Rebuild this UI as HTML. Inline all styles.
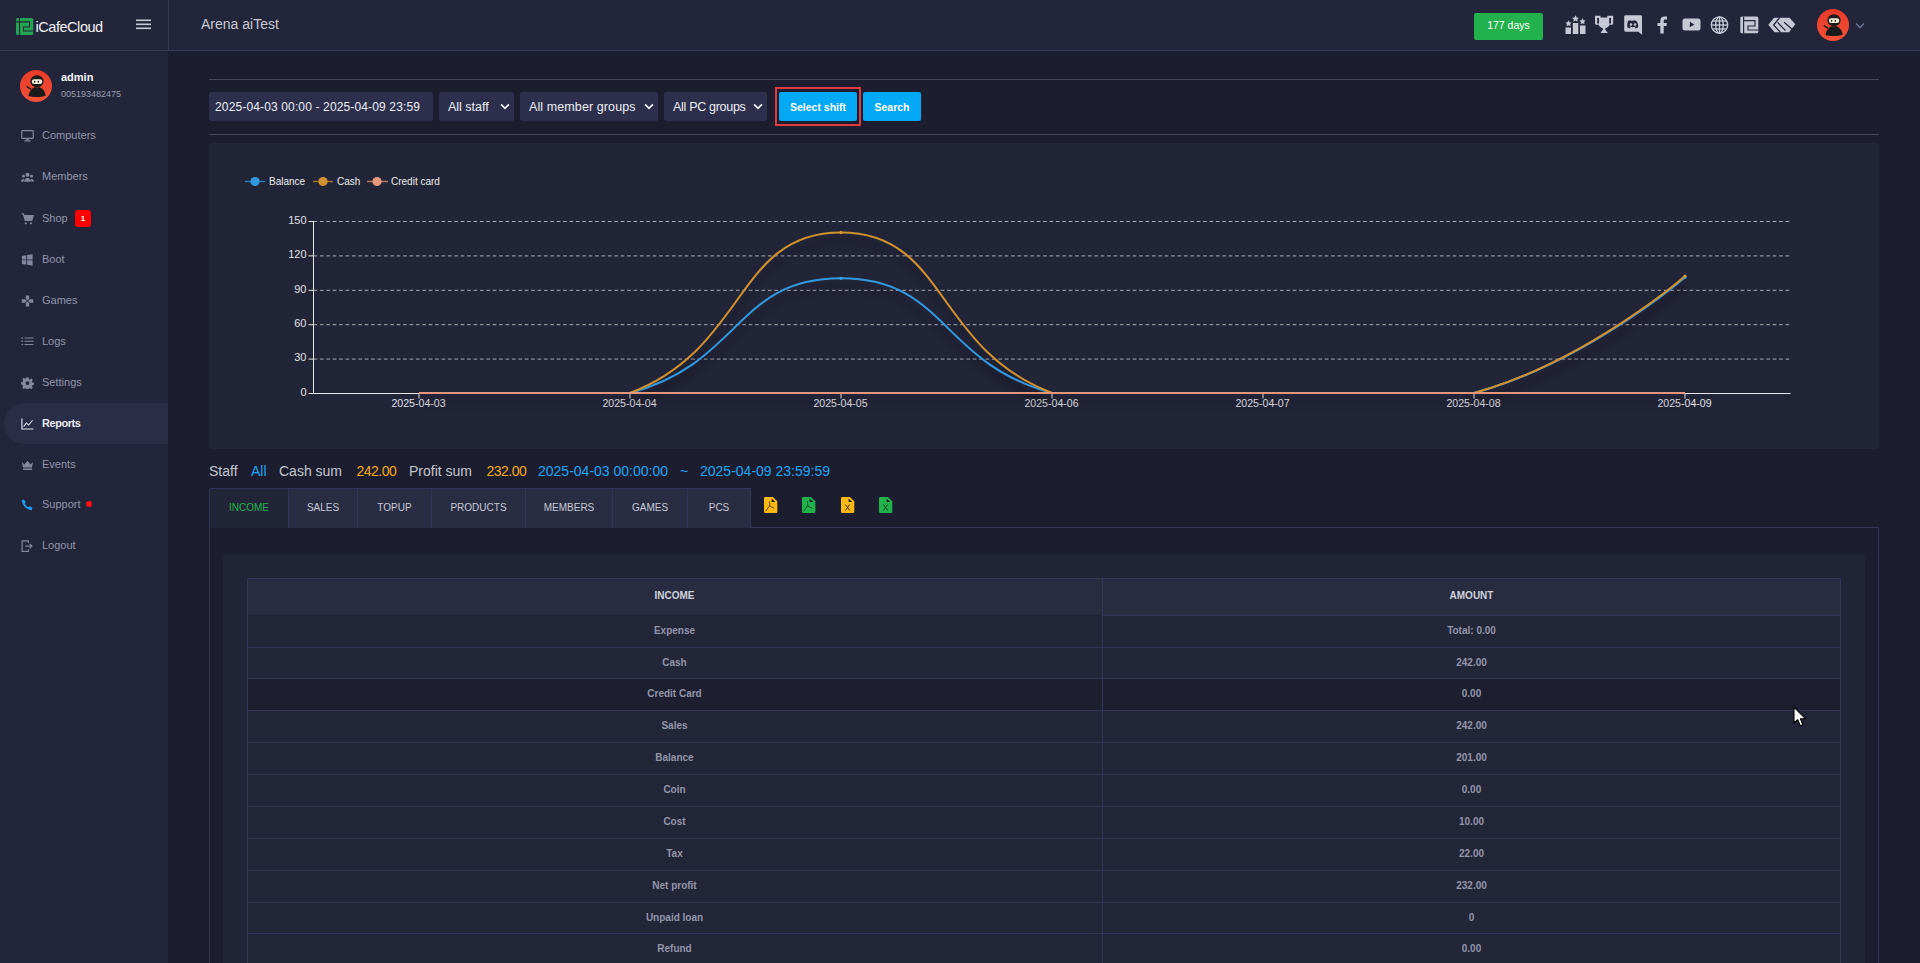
<!DOCTYPE html>
<html><head><meta charset="utf-8"><title>iCafeCloud Reports</title>
<style>
*{box-sizing:border-box;margin:0;padding:0}
html,body{width:1920px;height:963px;overflow:hidden;background:#1c1d2f;font-family:"Liberation Sans",sans-serif;color:#c8cad6}
.abs{position:absolute}
#hdr{position:absolute;left:0;top:0;width:1920px;height:51px;background:#23253a;border-bottom:1px solid #36385c}
#hdr .vsep{position:absolute;left:168px;top:0;width:1px;height:50px;background:#36385c}
#side{position:absolute;left:0;top:51px;width:168px;height:912px;background:#23253a}
.mi{position:absolute;left:0;width:168px;height:16px}
.mi .ic{position:absolute;left:20.5px;top:2.5px;width:13px;height:12px;display:block}.mi .ic svg{width:13px;height:12px;display:block}
.mi .t{position:absolute;left:42px;top:0;font-size:11px;line-height:16px;color:#9295aa}
.mi.act .t{color:#e8eaf2;font-weight:bold;letter-spacing:-0.45px}
.mi.act::before{content:"";position:absolute;left:4px;top:-12px;width:164px;height:41px;background:#2a2d47;border-radius:20px 0 0 20px}
.hline{position:absolute;left:209px;width:1670px;height:1px;background:#45475a}
.inp{position:absolute;top:92px;height:29px;background:#2d2f4d;border-radius:2px;color:#eceef6;font-size:12px;line-height:30px}
.sel{line-height:31px!important}.sel .car{position:absolute;right:4px;top:11px;width:10px;height:7px}
.btn{position:absolute;top:92px;height:29px;background:#03a9f4;border-radius:2px;color:#fff;font-size:10.5px;font-weight:bold;line-height:31px;text-align:center}
#panel{position:absolute;left:209px;top:143px;width:1670px;height:306px;background:#222438;border-radius:4px}
.sum{position:absolute;top:463px;font-size:14px;line-height:16px;white-space:nowrap}
.tab{position:absolute;top:488px;height:40px;background:#292c43;border:1px solid #333558;border-bottom:none;font-size:10px;line-height:38px;text-align:center;color:#c8cad6}
.tab.act{background:#222438;color:#20b54a}
#tc{position:absolute;left:209px;top:527px;width:1670px;height:440px;border:1px solid #333558;border-bottom:none;background:#1c1d2f}
#inner{position:absolute;left:223px;top:554px;width:1642px;height:420px;background:#222438;border-radius:4px}
#tbl{position:absolute;left:247px;top:578px;width:1594px;height:400px;border:1px solid #333558;border-bottom:none}
.th{position:absolute;left:247px;top:578px;width:1594px;height:37px;background:#292b40}
.th div,.tr div{position:absolute;top:0;height:100%;text-align:center;font-size:10px}
.th div{font-weight:bold;color:#d0d2dc;line-height:36px}
.c1{left:0;width:855px}
.c2{left:855px;width:739px}
.tr{position:absolute;left:247px;width:1594px;border-top:1px solid #333558}
.tr div{line-height:30px;color:#9496aa;font-weight:bold}
.vdiv{position:absolute;left:1102px;top:578px;width:1px;height:400px;background:#333558}
.ticon{position:absolute;top:16px;height:18px}
</style></head><body>
<div id="hdr">
  <div class="vsep"></div>
  <!-- logo -->
  <svg class="abs" style="left:16px;top:18px" width="90" height="18" viewBox="0 0 90 18">
    <rect x="0" y="0" width="17.2" height="17" rx="1.6" fill="#22a552"/>
    <g stroke="#23253a" stroke-width="1.1" fill="none"><path d="M3.5 0V17"/><path d="M0 3.9H13.5V9H7.5V13H17.2"/></g>
    <text x="19.5" y="14.2" font-family="Liberation Sans, sans-serif" font-size="14.5" fill="#f2f2f2" letter-spacing="-0.45">iCafeCloud</text>
  </svg>
  <svg class="abs" style="left:136px;top:19px" width="16" height="11" viewBox="0 0 16 11"><rect x="0" y="0.5" width="15" height="1.6" fill="#c8cad6"/><rect x="0" y="4.5" width="15" height="1.6" fill="#c8cad6"/><rect x="0" y="8.5" width="15" height="1.6" fill="#c8cad6"/></svg>
  <div class="abs" style="left:201px;top:16px;font-size:14px;line-height:16px;color:#c8cad6">Arena aiTest</div>
  <div class="abs" style="left:1474px;top:13px;width:69px;height:27px;background:#22b14c;border-radius:2px;color:#fff;font-size:10.5px;line-height:25px;text-align:center">177 days</div>
  
<svg class="abs" style="left:1565px;top:15px" width="21" height="19" viewBox="0 0 21 19">
<path d="M10.5 0.3l1.1 2.2 2.4.3-1.8 1.6.5 2.4-2.2-1.2-2.2 1.2.5-2.4-1.8-1.6 2.4-.3z" fill="#c6c8d6"/>
<path d="M3.5 5.3l1 2 2.2.3-1.6 1.5.4 2.2-2-1.1-2 1.1.4-2.2-1.6-1.5 2.2-.3z" fill="#c6c8d6"/>
<path d="M17.5 3.3l1 2 2.2.3-1.6 1.5.4 2.2-2-1.1-2 1.1.4-2.2-1.6-1.5 2.2-.3z" fill="#c6c8d6"/>
<rect x="0.5" y="12.5" width="5.5" height="6.5" fill="#c6c8d6"/><rect x="7.8" y="8" width="5.5" height="11" fill="#c6c8d6"/><rect x="15" y="10.5" width="5.5" height="8.5" fill="#c6c8d6"/></svg>
<svg class="abs" style="left:1595px;top:15px" width="19" height="19" viewBox="0 0 19 19">
<path d="M0 0.8H5.5V2.5H12.3V0.8H18.2V8.3C18.2 9.3 17.3 9.8 16.3 9.8H14.6C13.8 11.4 12.3 12.6 10.2 13.6V14.4L12.8 18.1H5.4L8 14.4V13.6C5.9 12.6 4.4 11.4 3.6 9.8H1.9C0.9 9.8 0 9.3 0 8.3Z" fill="#c6c8d6"/>
<rect x="2.2" y="2.9" width="1.8" height="5.6" fill="#23253a"/><rect x="14.2" y="2.9" width="1.8" height="5.6" fill="#23253a"/></svg>
<svg class="abs" style="left:1624px;top:15px" width="19" height="20" viewBox="0 0 19 20">
<path d="M1.6 0.2h15a1.4 1.4 0 0 1 1.4 1.4V19.7l-3.6-3H1.6A1.4 1.4 0 0 1 .2 15.3V1.6A1.4 1.4 0 0 1 1.6 0.2z" fill="#c6c8d6"/>
<path d="M3.2 12.3c1.2 .8 2.4 1.1 2.9 1.1l.6-.9c-.6-.2-1.1-.5-1.5-.8l.4-.2c2 .9 4.2 .9 6.2 0l.4 .2c-.4 .3-.9 .6-1.5 .8l.6 .9c.5 0 1.7-.3 2.9-1.1.1-2.4-.5-4.5-1.8-6.2-.9-.5-1.8-.8-2.6-.9l-.3.5c-.9-.1-1.8-.1-2.7 0l-.3-.5c-.9 .1-1.8 .4-2.6 .9C3.6 7.8 3.1 9.9 3.2 12.3z" fill="#23253a"/>
<circle cx="7" cy="9.4" r="1.25" fill="#c6c8d6"/><circle cx="11" cy="9.4" r="1.25" fill="#c6c8d6"/></svg>
<svg class="abs" style="left:1657px;top:16px" width="11" height="18" viewBox="0 0 11 18">
<path d="M3.3 17.5V10H0.5V7h2.8V4.8C3.3 2 5 0.5 7.5 0.5c1.2 0 2.2.1 2.5.1v2.8H8.3c-1.4 0-1.6.7-1.6 1.6V7h3.2l-.4 3H6.7v7.5z" fill="#c6c8d6"/></svg>
<svg class="abs" style="left:1682px;top:18px" width="19" height="13" viewBox="0 0 19 13">
<path d="M3 0.5h13a2.5 2.5 0 0 1 2.5 2.5v7a2.5 2.5 0 0 1-2.5 2.5H3A2.5 2.5 0 0 1 .5 10V3A2.5 2.5 0 0 1 3 .5z" fill="#c6c8d6"/>
<path d="M7.8 3.8v5.4l4.6-2.7z" fill="#23253a"/></svg>
<svg class="abs" style="left:1710px;top:16px" width="19" height="18" viewBox="0 0 19 18">
<g fill="none" stroke="#c6c8d6" stroke-width="1.35"><circle cx="9.5" cy="9" r="8.2"/><ellipse cx="9.5" cy="9" rx="3.8" ry="8.2"/><line x1="9.5" y1="0.8" x2="9.5" y2="17.2"/><line x1="1.3" y1="9" x2="17.7" y2="9"/><line x1="2.5" y1="5" x2="16.5" y2="5"/><line x1="2.5" y1="13" x2="16.5" y2="13"/></g></svg>
<svg class="abs" style="left:1740px;top:16px" width="19" height="18" viewBox="0 0 19 18">
<rect x="0.3" y="0.5" width="18" height="16.8" rx="1.6" fill="#c6c8d6"/>
<g stroke="#23253a" stroke-width="1.15" fill="none"><path d="M3.6 0.5V17.3"/><path d="M3.6 4.6H15V10H8V14H18.3"/></g></svg>
<svg class="abs" style="left:1768px;top:17px" width="29" height="17" viewBox="0 0 29 17">
<path d="M6 0.8h15.5l5.8 6.5-6.3 7.9H6.5L0.3 7.8z" fill="#c6c8d6"/>
<g stroke="#23253a" stroke-width="1.2" fill="none"><path d="M11.9 0.3L5.6 8l7.2 7.7"/><path d="M9.6 5.4l7.9 8.2"/><path d="M16.2 5.2l8.3 7.5"/></g></svg>

  <div class="abs" style="left:1817px;top:9px;width:32px;height:32px"><svg width="32" height="32" viewBox="0 0 32 32"><defs><linearGradient id="avg" x1="0" y1="0" x2="0" y2="1"><stop offset="0" stop-color="#e83a28"/><stop offset="1" stop-color="#f25238"/></linearGradient></defs><circle cx="16" cy="16" r="16" fill="url(#avg)"/>
<path d="M8.4 25.9 C9.3 21.5 11.6 18.6 14.3 17.3 L19.8 17.3 C22.6 18.6 25 21.6 25.8 25.4 C21 27.4 13 27.4 8.4 25.9z" fill="#1b1b1b"/>
<ellipse cx="17" cy="11.3" rx="6.6" ry="6" fill="#1b1b1b"/>
<rect x="11.8" y="9.2" width="10.5" height="4.9" rx="2.4" fill="#f4ecd9"/>
<ellipse cx="14.6" cy="11.8" rx="0.75" ry="1.05" fill="#1b1b1b"/><ellipse cx="18.4" cy="11.8" rx="0.75" ry="1.05" fill="#1b1b1b"/>
<path d="M6.7 16.4 L11 19.4" stroke="#1b1b1b" stroke-width="1.3"/></svg></div>
  <svg class="abs" style="left:1855px;top:22px" width="10" height="7" viewBox="0 0 10 7"><path d="M1 1.5l4 4 4-4" stroke="#6b7ba3" stroke-width="1.3" fill="none"/></svg>
</div>
<div id="side">
  <div class="abs" style="left:20px;top:19px;width:32px;height:32px"><svg width="32" height="32" viewBox="0 0 32 32"><defs><linearGradient id="avg" x1="0" y1="0" x2="0" y2="1"><stop offset="0" stop-color="#e83a28"/><stop offset="1" stop-color="#f25238"/></linearGradient></defs><circle cx="16" cy="16" r="16" fill="url(#avg)"/>
<path d="M8.4 25.9 C9.3 21.5 11.6 18.6 14.3 17.3 L19.8 17.3 C22.6 18.6 25 21.6 25.8 25.4 C21 27.4 13 27.4 8.4 25.9z" fill="#1b1b1b"/>
<ellipse cx="17" cy="11.3" rx="6.6" ry="6" fill="#1b1b1b"/>
<rect x="11.8" y="9.2" width="10.5" height="4.9" rx="2.4" fill="#f4ecd9"/>
<ellipse cx="14.6" cy="11.8" rx="0.75" ry="1.05" fill="#1b1b1b"/><ellipse cx="18.4" cy="11.8" rx="0.75" ry="1.05" fill="#1b1b1b"/>
<path d="M6.7 16.4 L11 19.4" stroke="#1b1b1b" stroke-width="1.3"/></svg></div>
  <div class="abs" style="left:61px;top:20px;font-size:11px;line-height:13px;font-weight:bold;color:#f4f4f8">admin</div>
  <div class="abs" style="left:61px;top:38px;font-size:9px;line-height:11px;color:#9b9db0">005193482475</div>
</div>
<div style="position:absolute;left:0;top:0">
<div class="mi" style="top:127px"><span class="ic"><svg width="15" height="14" viewBox="0 0 15 14"><rect x="0.8" y="0.8" width="13.4" height="9" rx="0.8" fill="none" stroke="#82869e" stroke-width="1.4"/><rect x="6" y="10" width="3" height="2.2" fill="#82869e"/><rect x="3.8" y="12" width="7.4" height="1.4" fill="#82869e"/></svg></span><span class="t">Computers</span></div>
<div class="mi" style="top:168px"><span class="ic"><svg width="15" height="14" viewBox="0 0 15 14"><circle cx="7.5" cy="4.5" r="2.4" fill="#82869e"/><circle cx="2.8" cy="6" r="1.7" fill="#82869e"/><circle cx="12.2" cy="6" r="1.7" fill="#82869e"/><path d="M3.6 12.5c0-2.6 1.7-4.2 3.9-4.2s3.9 1.6 3.9 4.2z" fill="#82869e"/><path d="M0 12.5c0-2 1-3.2 2.6-3.2.5 0 .9.1 1.2.3-.6.8-.9 1.8-.9 2.9z M15 12.5c0-2-1-3.2-2.6-3.2-.5 0-.9.1-1.2.3.6.8.9 1.8.9 2.9z" fill="#82869e"/></svg></span><span class="t">Members</span></div>
<div class="mi" style="top:210px"><span class="ic"><svg width="15" height="14" viewBox="0 0 15 14"><path d="M0.5 1h2.2l2.2 7.5h7.5l1.8-5.5H4" fill="none" stroke="#82869e" stroke-width="1.5"/><path d="M4 3h10l-1.8 5.5H5z" fill="#82869e"/><circle cx="5.5" cy="12" r="1.3" fill="#82869e"/><circle cx="11.5" cy="12" r="1.3" fill="#82869e"/></svg></span><span class="t">Shop</span></div>
<div class="mi" style="top:251px"><span class="ic"><svg width="15" height="14" viewBox="0 0 15 14"><path d="M1 2.2l5-0.8v5H1z M7 1.2l6.5-1v6.2H7z M1 7.4h5v5l-5-.8z M7 7.4h6.5v6.2L7 12.6z" fill="#82869e"/></svg></span><span class="t">Boot</span></div>
<div class="mi" style="top:292px"><span class="ic"><svg width="15" height="14" viewBox="0 0 15 14"><path d="M5.5 0.5h4v4l-2 2-2-2z M5.5 13.5h4v-4l-2-2-2 2z M0.8 5h4l2 2-2 2h-4z M14.2 5h-4l-2 2 2 2h4z" fill="#82869e"/></svg></span><span class="t">Games</span></div>
<div class="mi" style="top:333px"><span class="ic"><svg width="15" height="14" viewBox="0 0 15 14"><g fill="#82869e"><rect x="0.5" y="1.5" width="1.8" height="1.6"/><rect x="4" y="1.7" width="10.5" height="1.2"/><rect x="0.5" y="5.3" width="1.8" height="1.6"/><rect x="4" y="5.5" width="10.5" height="1.2"/><rect x="0.5" y="9.1" width="1.8" height="1.6"/><rect x="4" y="9.3" width="10.5" height="1.2"/></g></svg></span><span class="t">Logs</span></div>
<div class="mi" style="top:374px"><span class="ic"><svg width="15" height="14" viewBox="0 0 15 14"><path d="M6.3 0.3h2.4l.4 1.9 1.3.6 1.6-1.1 1.7 1.7-1.1 1.6.6 1.3 1.9.4v2.4l-1.9.4-.6 1.3 1.1 1.6-1.7 1.7-1.6-1.1-1.3.6-.4 1.9H6.3l-.4-1.9-1.3-.6-1.6 1.1-1.7-1.7 1.1-1.6-.6-1.3L0 8.3V5.9l1.9-.4.6-1.3-1.1-1.6 1.7-1.7 1.6 1.1 1.3-.6z" fill="#82869e"/><circle cx="7.5" cy="7.1" r="2.2" fill="#23253a"/></svg></span><span class="t">Settings</span></div>
<div class="mi act" style="top:415px"><span class="ic"><svg width="15" height="14" viewBox="0 0 15 14"><path d="M1 0.5v12.3h13.5" fill="none" stroke="#e8eaf4" stroke-width="1.3"/><path d="M3 10l3.2-4.2 2.6 2.4 4.6-5.6" fill="none" stroke="#e8eaf4" stroke-width="1.2"/></svg></span><span class="t">Reports</span></div>
<div class="mi" style="top:456px"><span class="ic"><svg width="15" height="14" viewBox="0 0 15 14"><path d="M1 3.5l3 2.8 3.5-4.3 3.5 4.3 3-2.8-1.3 6.5H2.3z" fill="#82869e"/><rect x="2.3" y="11" width="10.4" height="1.8" fill="#82869e"/></svg></span><span class="t">Events</span></div>
<div class="mi" style="top:496px"><span class="ic"><svg width="15" height="14" viewBox="0 0 15 14"><path d="M3.3 0.5l2.2 3-1.3 1.8c.8 1.8 2.3 3.3 4.3 4.3l1.8-1.3 3 2.2-.9 2.5C7 13 1 7 .8 1.4z" fill="#1e9cf0"/></svg></span><span class="t">Support</span></div>
<div class="mi" style="top:537px"><span class="ic"><svg width="15" height="14" viewBox="0 0 15 14"><path d="M8.5 3.5V1H1.2v12.2h7.3v-2.5" fill="none" stroke="#82869e" stroke-width="1.4"/><path d="M5 7.1h7.5 M10 4.5l2.6 2.6L10 9.7" fill="none" stroke="#82869e" stroke-width="1.4"/></svg></span><span class="t">Logout</span></div>

<div class="abs" style="left:75px;top:210px;width:16px;height:17px;background:#ff0000;border-radius:3px;color:#fff;font-size:8px;font-weight:bold;line-height:17px;text-align:center">1</div>
<div class="abs" style="left:86px;top:501px;width:6px;height:6px;background:#ff1010;border-radius:50%"></div>
</div>
<div class="hline" style="top:79px"></div>
<div class="hline" style="top:134px"></div>
<div class="inp" style="left:209px;width:224px;padding-left:6px;letter-spacing:0.14px">2025-04-03 00:00 - 2025-04-09 23:59</div>
<div class="inp sel" style="left:439px;width:75px;padding-left:9px;font-size:12.5px">All staff<svg class="car" viewBox="0 0 11 7"><path d="M1.2 1.2l4.3 4.3 4.3-4.3" stroke="#f0f0f4" stroke-width="2" fill="none"/></svg></div>
<div class="inp sel" style="left:520px;width:138px;padding-left:9px;font-size:12.5px;letter-spacing:0.1px">All member groups<svg class="car" viewBox="0 0 11 7"><path d="M1.2 1.2l4.3 4.3 4.3-4.3" stroke="#f0f0f4" stroke-width="2" fill="none"/></svg></div>
<div class="inp sel" style="left:664px;width:103px;padding-left:9px;font-size:12.5px;letter-spacing:-0.3px">All PC groups<svg class="car" viewBox="0 0 11 7"><path d="M1.2 1.2l4.3 4.3 4.3-4.3" stroke="#f0f0f4" stroke-width="2" fill="none"/></svg></div>
<div class="abs" style="left:775px;top:87px;width:86px;height:39px;border:2px solid #e0393e"></div>
<div class="btn" style="left:779px;width:78px">Select shift</div>
<div class="btn" style="left:863px;width:58px">Search</div>
<div id="panel"></div>
<svg class="chart" width="1920" height="963" viewBox="0 0 1920 963" style="position:absolute;left:0;top:0">
<defs><filter id="sh" x="-10%" y="-50%" width="120%" height="200%"><feDropShadow dx="0" dy="9" stdDeviation="5" flood-color="#000" flood-opacity="0.45"/></filter></defs>
<line x1="313.5" y1="221.5" x2="1790.5" y2="221.5" stroke="#d8d8d8" stroke-opacity="0.75" stroke-dasharray="3.7,2.7" stroke-width="1"/><line x1="313.5" y1="255.9" x2="1790.5" y2="255.9" stroke="#d8d8d8" stroke-opacity="0.75" stroke-dasharray="3.7,2.7" stroke-width="1"/><line x1="313.5" y1="290.3" x2="1790.5" y2="290.3" stroke="#d8d8d8" stroke-opacity="0.75" stroke-dasharray="3.7,2.7" stroke-width="1"/><line x1="313.5" y1="324.7" x2="1790.5" y2="324.7" stroke="#d8d8d8" stroke-opacity="0.75" stroke-dasharray="3.7,2.7" stroke-width="1"/><line x1="313.5" y1="359.1" x2="1790.5" y2="359.1" stroke="#d8d8d8" stroke-opacity="0.75" stroke-dasharray="3.7,2.7" stroke-width="1"/>
<line x1="313.5" y1="221.0" x2="313.5" y2="393.5" stroke="#e6e6e6" stroke-width="1"/>
<line x1="313.5" y1="393.5" x2="1790.5" y2="393.5" stroke="#e6e6e6" stroke-width="1"/>
<g font-family="Liberation Sans, sans-serif" font-size="11" fill="#e0e0e6"><line x1="308.5" y1="221.5" x2="313.5" y2="221.5" stroke="#e6e6e6"/><text x="306.5" y="223.7" text-anchor="end">150</text><line x1="308.5" y1="255.9" x2="313.5" y2="255.9" stroke="#e6e6e6"/><text x="306.5" y="258.1" text-anchor="end">120</text><line x1="308.5" y1="290.3" x2="313.5" y2="290.3" stroke="#e6e6e6"/><text x="306.5" y="292.5" text-anchor="end">90</text><line x1="308.5" y1="324.7" x2="313.5" y2="324.7" stroke="#e6e6e6"/><text x="306.5" y="326.9" text-anchor="end">60</text><line x1="308.5" y1="359.1" x2="313.5" y2="359.1" stroke="#e6e6e6"/><text x="306.5" y="361.3" text-anchor="end">30</text><line x1="308.5" y1="393.5" x2="313.5" y2="393.5" stroke="#e6e6e6"/><text x="306.5" y="395.7" text-anchor="end">0</text><line x1="419.0" y1="393.5" x2="419.0" y2="398.5" stroke="#e6e6e6"/><text x="418.5" y="407.0" text-anchor="middle" font-size="10.6">2025-04-03</text><line x1="630.0" y1="393.5" x2="630.0" y2="398.5" stroke="#e6e6e6"/><text x="629.5" y="407.0" text-anchor="middle" font-size="10.6">2025-04-04</text><line x1="841.0" y1="393.5" x2="841.0" y2="398.5" stroke="#e6e6e6"/><text x="840.5" y="407.0" text-anchor="middle" font-size="10.6">2025-04-05</text><line x1="1052.0" y1="393.5" x2="1052.0" y2="398.5" stroke="#e6e6e6"/><text x="1051.5" y="407.0" text-anchor="middle" font-size="10.6">2025-04-06</text><line x1="1263.0" y1="393.5" x2="1263.0" y2="398.5" stroke="#e6e6e6"/><text x="1262.5" y="407.0" text-anchor="middle" font-size="10.6">2025-04-07</text><line x1="1474.0" y1="393.5" x2="1474.0" y2="398.5" stroke="#e6e6e6"/><text x="1473.5" y="407.0" text-anchor="middle" font-size="10.6">2025-04-08</text><line x1="1685.0" y1="393.5" x2="1685.0" y2="398.5" stroke="#e6e6e6"/><text x="1684.5" y="407.0" text-anchor="middle" font-size="10.6">2025-04-09</text></g>
<g fill="none" stroke-width="2" filter="url(#sh)">
<path d="M419.00,393.00 C419.00,393.00 531.32,393.00 630.00,393.00 C742.32,362.48 735.50,278.33 841.00,278.33 C946.50,278.33 939.68,362.48 1052.00,393.00 C1150.68,393.00 1157.50,393.00 1263.00,393.00 C1368.50,393.00 1375.44,393.00 1474.00,393.00 C1586.44,362.14 1685.00,277.19 1685.00,277.19" stroke="#3399de"/>
<path d="M419.00,393.00 C419.00,393.00 536.49,393.00 630.00,393.00 C747.49,348.30 735.50,232.47 841.00,232.47 C946.50,232.47 934.51,348.30 1052.00,393.00 C1145.51,393.00 1157.50,393.00 1263.00,393.00 C1368.50,393.00 1375.56,393.00 1474.00,393.00 C1586.56,361.80 1685.00,276.04 1685.00,276.04" stroke="#cf922e"/>
<path d="M419.00,393.00 L1685.00,393.00" stroke="#e8977c"/>
</g><circle cx="841.00" cy="278.33" r="1.6" fill="#3aa2e8"/><circle cx="1685.00" cy="277.19" r="1.6" fill="#3aa2e8"/><circle cx="841.00" cy="232.47" r="1.6" fill="#d89a34"/><circle cx="1685.00" cy="276.04" r="1.6" fill="#d89a34"/>
<g font-family="Liberation Sans, sans-serif" font-size="10" fill="#eeeeee">
<line x1="245" y1="181.5" x2="265" y2="181.5" stroke="#3399de" stroke-width="1.5" stroke-opacity="0.75"/><circle cx="255" cy="181.5" r="4.6" fill="#3399de"/><text x="269" y="184.5">Balance</text>
<line x1="313" y1="181.5" x2="333" y2="181.5" stroke="#cf922e" stroke-width="1.5" stroke-opacity="0.75"/><circle cx="323" cy="181.5" r="4.6" fill="#cf922e"/><text x="337" y="184.5">Cash</text>
<line x1="367" y1="181.5" x2="388" y2="181.5" stroke="#e8977c" stroke-width="1.5" stroke-opacity="0.75"/><circle cx="377" cy="181.5" r="4.6" fill="#e8977c"/><text x="391" y="184.5">Credit card</text>
</g>
</svg>
<div class="sum" style="left:209px;color:#c4c6d0">Staff</div>
<div class="sum" style="left:251px;color:#1ea5f5">All</div>
<div class="sum" style="left:279px;color:#c4c6d0">Cash sum</div>
<div class="sum" style="left:356.5px;color:#f7a81b;letter-spacing:-0.5px">242.00</div>
<div class="sum" style="left:409px;color:#c4c6d0">Profit sum</div>
<div class="sum" style="left:486.5px;color:#f7a81b;letter-spacing:-0.5px">232.00</div>
<div class="sum" style="left:538px;color:#1ea5f5">2025-04-03 00:00:00</div>
<div class="sum" style="left:680px;color:#1ea5f5">~</div>
<div class="sum" style="left:700px;color:#1ea5f5">2025-04-09 23:59:59</div>
<div id="tc"></div>
<div class="tab act" style="left:209px;width:80px;border-top-left-radius:3px">INCOME</div>
<div class="tab" style="left:288px;width:70px">SALES</div>
<div class="tab" style="left:357px;width:75px">TOPUP</div>
<div class="tab" style="left:431px;width:95px">PRODUCTS</div>
<div class="tab" style="left:525px;width:88px">MEMBERS</div>
<div class="tab" style="left:612px;width:76px">GAMES</div>
<div class="tab" style="left:687px;width:64px">PCS</div>
<svg class="abs" style="left:764px;top:497px" width="14" height="17" viewBox="0 0 14 17">
<path d="M1.2 0h7.6l4.5 4.3v10.5a1.2 1.2 0 0 1-1.2 1.2H1.2A1.2 1.2 0 0 1 0 14.8V1.2A1.2 1.2 0 0 1 1.2 0z" fill="#fdb913"/>
<path d="M7.6 1.6v3.5h3.7z" fill="#1d1e2e"/><path d="M1.8 14.2 L5.6 8.6 M5.5 4.3 L5.8 9.2 L10.3 11.2" stroke="#3b2a08" stroke-width="0.9" fill="none" opacity="0.85"/></svg><svg class="abs" style="left:802px;top:497px" width="14" height="17" viewBox="0 0 14 17">
<path d="M1.2 0h7.6l4.5 4.3v10.5a1.2 1.2 0 0 1-1.2 1.2H1.2A1.2 1.2 0 0 1 0 14.8V1.2A1.2 1.2 0 0 1 1.2 0z" fill="#22b24c"/>
<path d="M7.6 1.6v3.5h3.7z" fill="#1d1e2e"/><path d="M1.8 14.2 L5.6 8.6 M5.5 4.3 L5.8 9.2 L10.3 11.2" stroke="#0c3d18" stroke-width="0.9" fill="none" opacity="0.85"/></svg><svg class="abs" style="left:841px;top:497px" width="14" height="17" viewBox="0 0 14 17">
<path d="M1.2 0h7.6l4.5 4.3v10.5a1.2 1.2 0 0 1-1.2 1.2H1.2A1.2 1.2 0 0 1 0 14.8V1.2A1.2 1.2 0 0 1 1.2 0z" fill="#fdb913"/>
<path d="M7.6 1.6v3.5h3.7z" fill="#1d1e2e"/><path d="M4.3 7.5 L8.8 13.6 M8.8 7.5 L4.3 13.6" stroke="#3b2a08" stroke-width="0.95" fill="none"/></svg><svg class="abs" style="left:879px;top:497px" width="14" height="17" viewBox="0 0 14 17">
<path d="M1.2 0h7.6l4.5 4.3v10.5a1.2 1.2 0 0 1-1.2 1.2H1.2A1.2 1.2 0 0 1 0 14.8V1.2A1.2 1.2 0 0 1 1.2 0z" fill="#22b24c"/>
<path d="M7.6 1.6v3.5h3.7z" fill="#1d1e2e"/><path d="M4.3 7.5 L8.8 13.6 M8.8 7.5 L4.3 13.6" stroke="#0c3d18" stroke-width="0.95" fill="none"/></svg>
<div id="inner"></div>
<div class="th"><div class="c1">INCOME</div><div class="c2">AMOUNT</div></div>
<div class="tr" style="top:615px;height:32px;background:#232539"><div class="c1">Expense</div><div class="c2">Total: 0.00</div></div>
<div class="tr" style="top:647px;height:31px;background:#232539"><div class="c1">Cash</div><div class="c2">242.00</div></div>
<div class="tr" style="top:678px;height:32px;background:#1d1e2f"><div class="c1">Credit Card</div><div class="c2">0.00</div></div>
<div class="tr" style="top:710px;height:32px;background:#232539"><div class="c1">Sales</div><div class="c2">242.00</div></div>
<div class="tr" style="top:742px;height:32px;background:#232539"><div class="c1">Balance</div><div class="c2">201.00</div></div>
<div class="tr" style="top:774px;height:32px;background:#232539"><div class="c1">Coin</div><div class="c2">0.00</div></div>
<div class="tr" style="top:806px;height:32px;background:#232539"><div class="c1">Cost</div><div class="c2">10.00</div></div>
<div class="tr" style="top:838px;height:32px;background:#232539"><div class="c1">Tax</div><div class="c2">22.00</div></div>
<div class="tr" style="top:870px;height:32px;background:#232539"><div class="c1">Net profit</div><div class="c2">232.00</div></div>
<div class="tr" style="top:902px;height:31px;background:#232539"><div class="c1">Unpaid loan</div><div class="c2">0</div></div>
<div class="tr" style="top:933px;height:32px;background:#232539"><div class="c1">Refund</div><div class="c2">0.00</div></div>

<div id="tbl"></div>
<div class="vdiv"></div>
<div class="abs" style="left:248px;top:615px;width:854px;height:1px;background:#1f2032"></div>
<svg class="abs" style="left:1792.7px;top:705.7px" width="15" height="22" viewBox="0 0 15 22">
<path d="M1 1 L1 17 L4.7 13.7 L7.3 19.8 L9.9 18.7 L7.4 12.8 L12.4 12.6 z" fill="#fff" stroke="#000" stroke-width="1.1" stroke-linejoin="round"/></svg>
</body></html>
